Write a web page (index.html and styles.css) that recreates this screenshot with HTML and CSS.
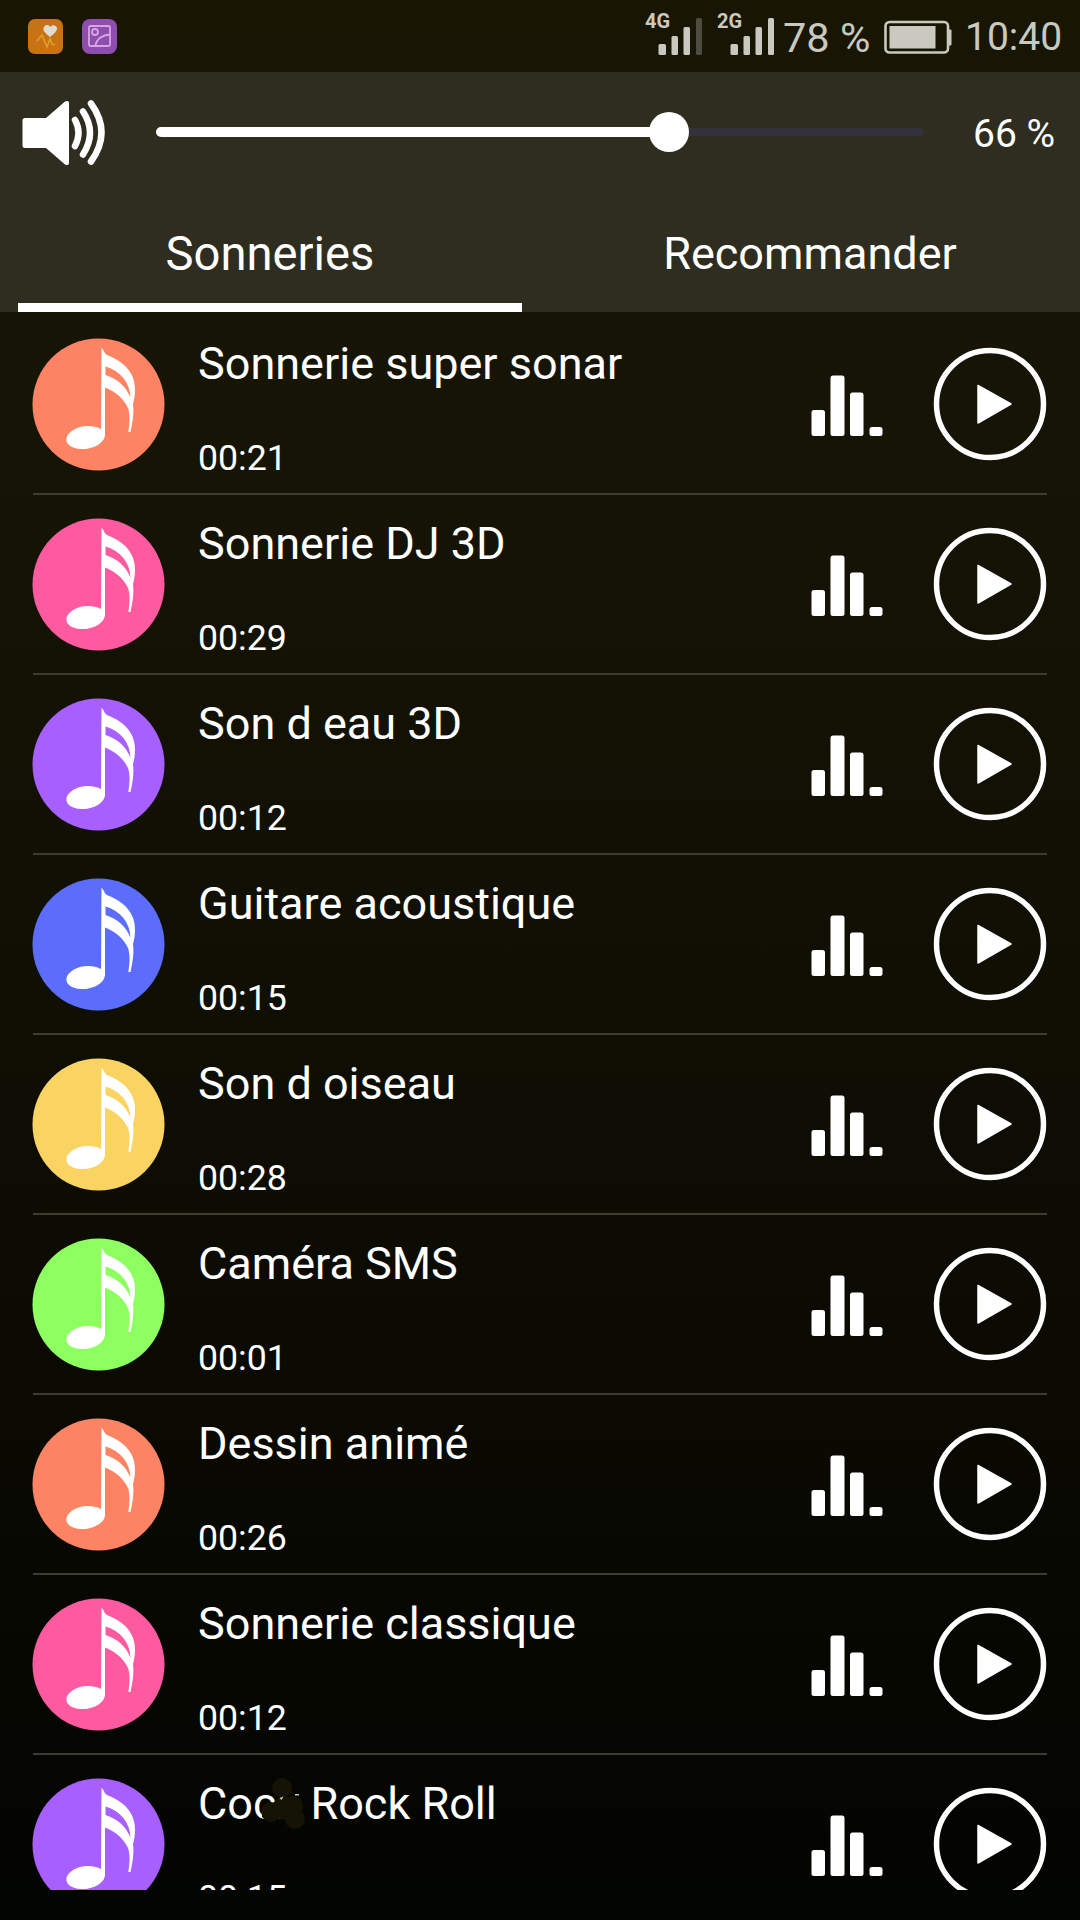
FILE: index.html
```html
<!DOCTYPE html>
<html lang="fr">
<head>
<meta charset="utf-8">
<title>Sonneries</title>
<link rel="stylesheet" href="styles.css">
</head>
<body>
<svg class="defs" aria-hidden="true">
  <symbol id="note" viewBox="0 0 134 134">
    <circle cx="66.500" cy="66.500" r="66" fill="currentColor"/>
    <g fill="#fff">
      <ellipse cx="53.500" cy="99.500" rx="19.300" ry="11.300" transform="rotate(-9 53.500 99.500)"/>
      <path d="M69.500 9.500 L72 13 C72.500 15 74 16.500 76 17.500 C93 24 103.500 36 103 52 C103 58 102 62 101 66 C102 74 101 83 98.500 94 L96.300 94 C98 84 98 76 96 70 C92 61 84 54 73 49.500 L73 98 L69 101 Z M73.500 28.500 L73.500 37 C86 41 94 49 98.500 59.500 C98 45 89 33 73.500 28.500 Z" fill-rule="evenodd"/>
    </g>
  </symbol>
  <symbol id="eq" viewBox="0 0 72 62">
    <g fill="#fff">
      <rect x="0.500" y="35" width="13.500" height="26" rx="2.500"/>
      <rect x="19.500" y="0.500" width="14" height="60.500" rx="2.500"/>
      <rect x="39" y="17.500" width="13.500" height="43.500" rx="2.500"/>
      <rect x="58.500" y="52" width="13" height="9" rx="2.500"/>
    </g>
  </symbol>
  <symbol id="play" viewBox="0 0 114 114">
    <circle cx="57" cy="57" r="53.500" fill="none" stroke="#fff" stroke-width="5.500"/>
    <path d="M45 38.500 L78 57 L45 76 Z" fill="#fff" stroke="#fff" stroke-width="1.500" stroke-linejoin="round"/>
  </symbol>
</svg>

<div class="screen">
  <div class="status">
    <div class="notifications">
      <svg class="app" viewBox="0 0 35 35">
        <rect width="35" height="35" rx="7" fill="#c87313"/>
        <path d="M9 22 L14 16 L19 28 L22 20 L24 25 L27 26" fill="none" stroke="#e29d2d" stroke-width="1.600"/>
        <path d="M22 18 C17 14 14 11 16 8 C18 5 21 6 22.500 8 C24 5 28 6 29 8.500 C29.500 12 26 15 22 18 Z" fill="#e0dcd4"/>
      </svg>
      <svg class="app" viewBox="0 0 35 35">
        <rect width="35" height="35" rx="8" fill="#8d4ead"/>
        <g fill="none" stroke="#d6a5e6" stroke-width="1.800">
          <rect x="7" y="7" width="21" height="20" rx="1.500"/>
          <circle cx="13" cy="13" r="3"/>
          <path d="M13 27 C15 20 19 16 28 15.500"/>
        </g>
      </svg>
    </div>
    <div class="indicators">
      <div class="signal">
        <span class="net">4G</span>
        <svg class="bars" viewBox="0 0 44 38"><g fill="#c9c9c2"><rect x="0.500" y="26" width="7.500" height="11" rx="1.500"/><rect x="13.500" y="18" width="6.500" height="19" rx="1.500"/><rect x="25.500" y="9" width="6.500" height="28" rx="1.500"/></g><rect x="38" width="6" height="37" rx="1.500" fill="#4d4c3e"/></svg>
      </div>
      <div class="signal">
        <span class="net">2G</span>
        <svg class="bars" viewBox="0 0 44 38"><g fill="#c9c9c2"><rect x="0.500" y="26" width="7.500" height="11" rx="1.500"/><rect x="13.500" y="18" width="6.500" height="19" rx="1.500"/><rect x="25.500" y="9" width="6.500" height="28" rx="1.500"/><rect x="38" width="6" height="37" rx="1.500"/></g></svg>
      </div>
      <span class="charge">78 %</span>
      <svg class="battery" viewBox="0 0 68 34">
        <rect x="1.500" y="2" width="62.500" height="30.500" rx="4" fill="none" stroke="#c9c9c0" stroke-width="2.600"/>
        <rect x="5.500" y="6" width="46" height="22.500" fill="#c9c9c0"/>
        <rect x="64" y="9.500" width="3.500" height="16" rx="1" fill="#c9c9c0"/>
      </svg>
      <span class="clock">10:40</span>
    </div>
  </div>

  <header class="header">
    <div class="volume">
      <svg class="speaker" viewBox="0 0 84 68">
        <path d="M3 18 H24 L43 1.500 Q47 0 47 3 V63 Q47 66 43 64.500 L24 48 H3 Q0.500 48 0.500 45.500 V20.500 Q0.500 18 3 18 Z" fill="#fff"/>
        <g fill="none" stroke="#fff" stroke-width="6.500" stroke-linecap="round">
          <path d="M53 20 Q60 32.500 53 46"/>
          <path d="M61 11.500 Q75 32.500 61 54.500"/>
          <path d="M69 3.500 Q90 32.500 69 61.500"/>
        </g>
      </svg>
      <div class="slider">
        <div class="filled"></div>
        <div class="knob"></div>
        <div class="rest"></div>
      </div>
      <span class="level">66 %</span>
    </div>
    <nav class="tabs">
      <a class="tab active"><span class="label">Sonneries</span></a>
      <a class="tab"><span class="label">Recommander</span></a>
    </nav>
  </header>

  <main class="list">
    <div class="row"><svg class="note orange"><use href="#note"/></svg><div class="info"><span class="name">Sonnerie super sonar</span><span class="time">00:21</span></div><svg class="eq"><use href="#eq"/></svg><svg class="play"><use href="#play"/></svg></div>
    <div class="row"><svg class="note pink"><use href="#note"/></svg><div class="info"><span class="name">Sonnerie DJ 3D</span><span class="time">00:29</span></div><svg class="eq"><use href="#eq"/></svg><svg class="play"><use href="#play"/></svg></div>
    <div class="row"><svg class="note purple"><use href="#note"/></svg><div class="info"><span class="name">Son d eau 3D</span><span class="time">00:12</span></div><svg class="eq"><use href="#eq"/></svg><svg class="play"><use href="#play"/></svg></div>
    <div class="row"><svg class="note blue"><use href="#note"/></svg><div class="info"><span class="name">Guitare acoustique</span><span class="time">00:15</span></div><svg class="eq"><use href="#eq"/></svg><svg class="play"><use href="#play"/></svg></div>
    <div class="row"><svg class="note yellow"><use href="#note"/></svg><div class="info"><span class="name">Son d oiseau</span><span class="time">00:28</span></div><svg class="eq"><use href="#eq"/></svg><svg class="play"><use href="#play"/></svg></div>
    <div class="row"><svg class="note green"><use href="#note"/></svg><div class="info"><span class="name">Caméra SMS</span><span class="time">00:01</span></div><svg class="eq"><use href="#eq"/></svg><svg class="play"><use href="#play"/></svg></div>
    <div class="row"><svg class="note orange"><use href="#note"/></svg><div class="info"><span class="name">Dessin animé</span><span class="time">00:26</span></div><svg class="eq"><use href="#eq"/></svg><svg class="play"><use href="#play"/></svg></div>
    <div class="row"><svg class="note pink"><use href="#note"/></svg><div class="info"><span class="name">Sonnerie classique</span><span class="time">00:12</span></div><svg class="eq"><use href="#eq"/></svg><svg class="play"><use href="#play"/></svg></div>
    <div class="row"><svg class="note purple"><use href="#note"/></svg><div class="info"><span class="name">Cock Rock Roll<svg class="smudge" viewBox="0 0 44 54"><path d="M16 8 H30 V16 H42 V46 H24 L14 22 Z" fill="#060602"/><g fill="#141304"><circle cx="20" cy="11" r="10"/><circle cx="9" cy="35" r="10"/><circle cx="22" cy="31" r="11.500"/><circle cx="31" cy="29" r="10"/><circle cx="33" cy="42" r="10"/></g><path d="M17.500 21 l4 -1.500 -2 3.500 z M33 17 h4 v1.500 h-4 z" fill="#c8c8c0"/></svg></span><span class="time">00:15</span></div><svg class="eq"><use href="#eq"/></svg><svg class="play"><use href="#play"/></svg></div>
  </main>
</div>
</body>
</html>
```

FILE: styles.css
```css
* { box-sizing: border-box; }

body {
  margin: 0;
  background: #040502;
  font-family: Roboto, "Liberation Sans", sans-serif;
  color: #fff;
}

.defs { position: absolute; width: 0; height: 0; }

.screen {
  width: 1080px;
  height: 1920px;
  overflow: hidden;
  display: flex;
  flex-direction: column;
  background: linear-gradient(#181603 0, #161405 450px, #100f04 1000px, #070702 1650px, #030501 1920px);
}

/* status bar */
.status {
  flex: none;
  height: 72px;
  display: flex;
  justify-content: space-between;
  padding: 0 16px 0 28px;
  color: #c9c9c0;
}
.notifications { display: flex; gap: 19px; padding-top: 18.500px; }
.app { width: 35px; height: 35px; display: block; }
.indicators { display: flex; }
.signal { display: flex; width: 72px; }
.net {
  width: 13px;
  margin-top: 9px;
  font-size: 20px;
  line-height: 24px;
  font-weight: 700;
  white-space: nowrap;
}
.bars { flex: none; width: 44px; height: 38px; margin-top: 18px; }
.charge { width: 101px; font-size: 41.500px; line-height: 72px; padding-top: 2px; white-space: nowrap; margin-left: -6px; }
.battery { width: 68px; height: 34px; margin-top: 20px; }
.clock { width: 99px; margin-left: 13px; font-size: 39px; line-height: 75px; white-space: nowrap; }

/* volume and tabs */
.header {
  flex: none;
  height: 240px;
  display: flex;
  flex-direction: column;
  background: #2f2d1f;
}
.volume { height: 120px; display: flex; align-items: center; padding-left: 22px; }
.speaker { flex: none; width: 84px; height: 68px; margin-top: 3px; }
.slider { width: 768px; margin-left: 50px; display: flex; align-items: center; }
.filled { width: 497px; height: 10px; border-radius: 5px 0 0 5px; background: #fff; }
.knob { width: 40px; height: 40px; margin: 0 -4px; border-radius: 50%; background: #fff; z-index: 1; }
.rest { flex: 1; height: 8px; border-radius: 0 4px 4px 0; background: #33313a; }
.level { margin-left: 49px; font-size: 39px; line-height: 48px; padding-top: 4px; white-space: nowrap; }
.tabs { height: 120px; display: flex; padding: 0 18px; gap: 36px; }
.tab {
  width: 504px;
  display: flex;
  justify-content: center;
  padding-top: 34px;
  font-size: 45px;
  line-height: 56px;
}
.active { font-size: 47.200px; border-bottom: 9.500px solid #fff; }

/* ringtones */
.list { height: 1578px; flex: none; overflow: hidden; padding: 3px 33px 0; }
.row { height: 180px; display: flex; border-bottom: 2.500px solid #3d3c31; }
.note { flex: none; width: 134px; height: 134px; margin: 23px 0 0 -1px; }
.info { flex: 1; display: flex; flex-direction: column; padding: 21px 0 0 32px; }
.name { position: relative; font-size: 45px; line-height: 56px; white-space: nowrap; }
.time { font-size: 35.700px; line-height: 44px; margin-top: 44px; }
.eq { flex: none; width: 72px; height: 62px; margin-top: 60px; }
.play { flex: none; width: 114px; height: 114px; margin: 32px 0 0 50px; }
.smudge { position: absolute; left: 64px; top: 1px; width: 44px; height: 54px; }

.orange { color: #fc8464; }
.pink { color: #fd5aa0; }
.purple { color: #a75ffd; }
.blue { color: #5d6dfb; }
.yellow { color: #f9d463; }
.green { color: #8eff60; }
```
